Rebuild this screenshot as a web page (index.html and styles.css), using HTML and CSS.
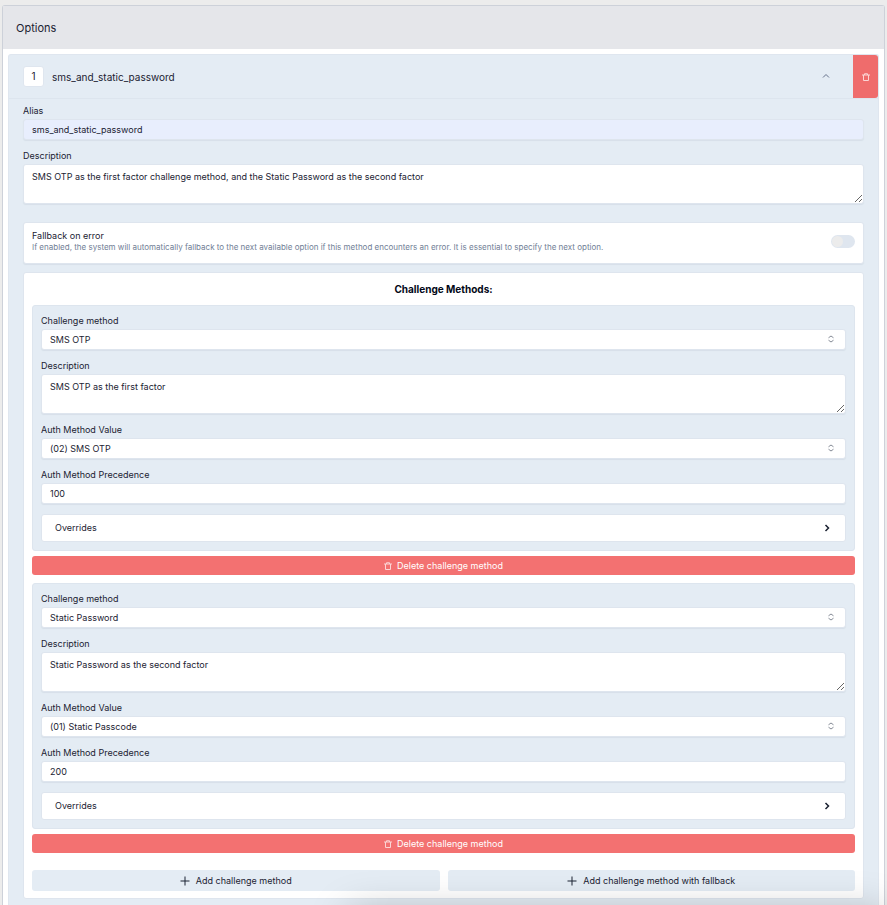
FILE: index.html
```html
<!DOCTYPE html>
<html lang="en">
<head>
    <meta charset="UTF-8">
    <meta name="viewport" content="width=device-width, initial-scale=1.0">
    <title>Options</title>
    <link rel="stylesheet" href="styles.css">
</head>
<body>
    <svg class="sprite" aria-hidden="true">
        <symbol id="trash" viewBox="0 0 16 16">
            <path d="M0 4h16M5 4V1.5h6V4M3 4v11h10V4" />
        </symbol>
        <symbol id="sort" viewBox="0 0 8 10">
            <path d="M1.5 3.8 4 2 6.5 3.8M1.5 6.2 4 8 6.5 6.2" />
        </symbol>
        <symbol id="up" viewBox="0 0 10 10">
            <path d="M2 5.5 5 2.5 8 5.5" />
        </symbol>
        <symbol id="right" viewBox="0 0 10 10">
            <path d="M3.5 2 6.5 5 3.5 8" />
        </symbol>
        <symbol id="plus" viewBox="0 0 10 10">
            <path d="M5 .5v9M.5 5h9" />
        </symbol>
    </svg>

    <main class="panel">
        <h1 class="panel-title">Options</h1>
        <div class="panel-body">
            <section class="option">
                <header class="option-header">
                    <button type="button" class="toggle">
                        <span class="number">1</span>
                        <span class="name">sms_and_static_password</span>
                        <svg class="icon-up"><use href="#up" /></svg>
                    </button>
                    <button type="button" class="remove" aria-label="Delete option">
                        <svg class="icon-trash"><use href="#trash" /></svg>
                    </button>
                </header>

                <div class="option-body">
                    <div class="field">
                        <label for="alias">Alias</label>
                        <input class="control filled" id="alias" type="text" value="sms_and_static_password">
                    </div>
                    <div class="field">
                        <label for="description">Description</label>
                        <textarea class="control" id="description">SMS OTP as the first factor challenge method, and the Static Password as the second factor</textarea>
                    </div>

                    <div class="fallback">
                        <div>
                            <label for="fallback">Fallback on error</label>
                            <p>If enabled, the system will automatically fallback to the next available option if this method encounters an error. It is essential to specify the next option.</p>
                        </div>
                        <input class="switch" id="fallback" type="checkbox">
                    </div>

                    <div class="methods">
                        <h2>Challenge Methods:</h2>

                        <div class="method">
                            <div class="field">
                                <label for="method1">Challenge method</label>
                                <div class="select">
                                    <select class="control" id="method1">
                                        <option>SMS OTP</option>
                                        <option>Static Password</option>
                                    </select>
                                    <svg><use href="#sort" /></svg>
                                </div>
                            </div>
                            <div class="field">
                                <label for="description1">Description</label>
                                <textarea class="control" id="description1">SMS OTP as the first factor</textarea>
                            </div>
                            <div class="field">
                                <label for="value1">Auth Method Value</label>
                                <div class="select">
                                    <select class="control" id="value1">
                                        <option>(02) SMS OTP</option>
                                        <option>(01) Static Passcode</option>
                                    </select>
                                    <svg><use href="#sort" /></svg>
                                </div>
                            </div>
                            <div class="field">
                                <label for="precedence1">Auth Method Precedence</label>
                                <input class="control" id="precedence1" type="text" value="100">
                            </div>
                            <button type="button" class="overrides">
                                Overrides
                                <svg><use href="#right" /></svg>
                            </button>
                        </div>
                        <button type="button" class="delete">
                            <svg class="icon-trash"><use href="#trash" /></svg>
                            Delete challenge method
                        </button>

                        <div class="method">
                            <div class="field">
                                <label for="method2">Challenge method</label>
                                <div class="select">
                                    <select class="control" id="method2">
                                        <option>Static Password</option>
                                        <option>SMS OTP</option>
                                    </select>
                                    <svg><use href="#sort" /></svg>
                                </div>
                            </div>
                            <div class="field">
                                <label for="description2">Description</label>
                                <textarea class="control" id="description2">Static Password as the second factor</textarea>
                            </div>
                            <div class="field">
                                <label for="value2">Auth Method Value</label>
                                <div class="select">
                                    <select class="control" id="value2">
                                        <option>(01) Static Passcode</option>
                                        <option>(02) SMS OTP</option>
                                    </select>
                                    <svg><use href="#sort" /></svg>
                                </div>
                            </div>
                            <div class="field">
                                <label for="precedence2">Auth Method Precedence</label>
                                <input class="control" id="precedence2" type="text" value="200">
                            </div>
                            <button type="button" class="overrides">
                                Overrides
                                <svg><use href="#right" /></svg>
                            </button>
                        </div>
                        <button type="button" class="delete">
                            <svg class="icon-trash"><use href="#trash" /></svg>
                            Delete challenge method
                        </button>

                        <div class="actions">
                            <button type="button" class="add">
                                <svg><use href="#plus" /></svg>
                                Add challenge method
                            </button>
                            <button type="button" class="add">
                                <svg><use href="#plus" /></svg>
                                Add challenge method with fallback
                            </button>
                        </div>
                    </div>
                </div>
            </section>
        </div>
    </main>
    <div class="bottom-shade"></div>
</body>
</html>
```

FILE: styles.css
```css
*{
    margin: 0;
    padding: 0;
    box-sizing: border-box;
}

body{
    min-height: 100vh;
    padding: 5px 2px 0;
    display: flex;
    flex-direction: column;
    background-color: #ececec;
    color: #1b2232;
    font-family: Inter, "Liberation Sans", sans-serif;
    font-size: 9px;
    line-height: 12px;
}

button, input, select, textarea{
    font: inherit;
    color: inherit;
}

button{
    border: none;
    background: none;
    cursor: pointer;
}

svg{
    fill: none;
    stroke: currentColor;
    flex-shrink: 0;
}

.sprite{
    display: none;
}

.panel, .panel-body{
    flex: 1;
    display: flex;
    flex-direction: column;
}

.panel{
    border: 1px solid #cdd1d9;
    border-bottom: none;
    border-radius: 3px 3px 0 0;
    background-color: white;
}

.panel-title{
    padding: 14px 13px 13px;
    background-color: #e5e6ea;
    font-size: 11px;
    line-height: 16px;
    font-weight: 400;
}

.panel-body{
    padding: 5px 5px 0;
}

.option{
    flex: 1;
    border: 1px solid #dfe6ef;
    border-bottom: none;
    border-radius: 3px 3px 0 0;
    background-color: #e4ecf4;
}

.option-header{
    display: flex;
    height: 44px;
    border-bottom: 1px solid #dde5ee;
}

.toggle{
    flex: 1;
    display: flex;
    align-items: center;
    gap: 8px;
    padding: 0 22px 0 14px;
    font-size: 10px;
    text-align: left;
}

.number{
    width: 21px;
    height: 21px;
    border: 1px solid #dfe6ef;
    border-radius: 3px;
    background-color: white;
    line-height: 19px;
    text-align: center;
}

.name{
    flex: 1;
}

.icon-up{
    width: 10px;
    height: 10px;
    color: #64708a;
}

.remove{
    width: 25px;
    display: flex;
    align-items: center;
    justify-content: center;
    border-radius: 0 3px 3px 0;
    background-color: #ef6c6c;
    color: #fbd5d5;
}

.icon-trash{
    width: 8px;
    height: 8px;
    stroke-width: 2;
}

.option-body{
    padding: 6px 14px;
}

.field{
    display: flex;
    flex-direction: column;
    gap: 2px;
    margin-bottom: 10px;
}

.control{
    display: block;
    width: 100%;
    height: 21px;
    padding: 0 8px;
    border: 1px solid #dee5ee;
    border-radius: 3px;
    background-color: white;
    box-shadow: 0 1px 1px rgba(100, 116, 139, 0.1);
}

.filled{
    background-color: #e8eefd;
}

textarea.control{
    height: 40px;
    padding: 6px 8px;
    resize: vertical;
}

.select{
    position: relative;
}

.select select{
    appearance: none;
}

.select svg{
    position: absolute;
    top: 5px;
    right: 11px;
    width: 8px;
    height: 10px;
    color: #858b96;
    pointer-events: none;
}

.fallback{
    display: flex;
    align-items: center;
    justify-content: space-between;
    margin: 18px 0 8px;
    padding: 7px 8px 10px;
    border: 1px solid #dee5ee;
    border-radius: 3px;
    background-color: white;
    box-shadow: 0 1px 1px rgba(100, 116, 139, 0.1);
}

.fallback p{
    font-size: 8px;
    line-height: 11px;
    color: #718096;
}

.switch{
    appearance: none;
    flex-shrink: 0;
    width: 24px;
    height: 13px;
    border-radius: 7px;
    background-color: #dfe6ef;
}

.switch::before{
    content: "";
    display: block;
    width: 11px;
    height: 11px;
    margin: 1px;
    border-radius: 50%;
    background-color: #ececec;
}

.switch:checked::before{
    margin-left: 12px;
}

.methods{
    padding: 8px 8px 7px;
    border: 1px solid #dee5ee;
    border-radius: 3px;
    background-color: white;
}

.methods h2{
    margin-bottom: 8px;
    color: #020817;
    font-size: 10px;
    line-height: 16px;
    font-weight: 700;
    text-align: center;
}

.method{
    padding: 9px 8px 8px;
    border: 1px solid #dde5ee;
    border-radius: 3px;
    background-color: #e4ecf4;
}

.overrides{
    width: 100%;
    height: 28px;
    display: flex;
    align-items: center;
    justify-content: space-between;
    padding: 0 13px;
    border: 1px solid #dee5ee;
    border-radius: 3px;
    background-color: white;
}

.overrides svg{
    width: 10px;
    height: 10px;
    stroke-width: 1.5;
}

.delete, .add{
    display: flex;
    align-items: center;
    justify-content: center;
    border-radius: 3px;
}

.delete{
    width: 100%;
    height: 19px;
    gap: 5px;
    margin: 5px 0 8px;
    background-color: #f37171;
    color: white;
}

.delete svg{
    color: #fbd5d5;
}

.actions{
    display: flex;
    gap: 8px;
    margin-top: 17px;
}

.add{
    flex: 1 1 0;
    height: 21px;
    gap: 6px;
    background-color: #e4ecf4;
}

.add svg{
    width: 10px;
    height: 10px;
}

/* soft shade along the bottom edge of the window */
.bottom-shade{
    position: fixed;
    left: 350px;
    right: 0;
    top: 100%;
    height: 40px;
    box-shadow: 0 8px 40px rgba(0, 0, 0, 0.25);
    pointer-events: none;
}
```
